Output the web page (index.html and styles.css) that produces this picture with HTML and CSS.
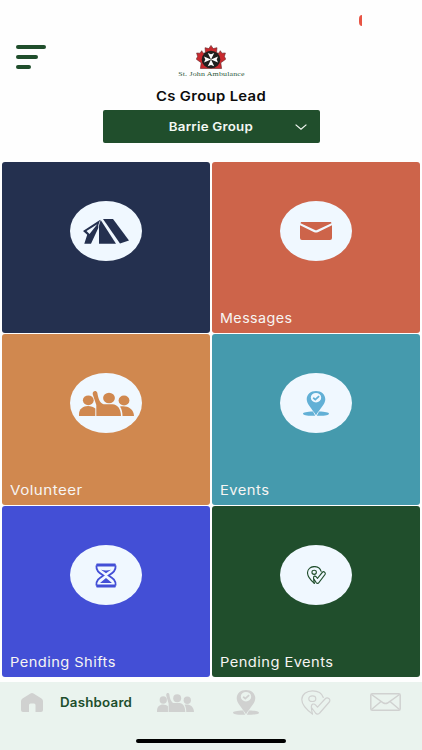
FILE: index.html
```html
<!DOCTYPE html>
<html lang="en">
<head>
  <meta charset="UTF-8">
  <meta name="viewport" content="width=device-width, initial-scale=1">
  <title>Dashboard</title>
  <link rel="stylesheet" href="styles.css">
</head>
<body>
  <!-- shared icons -->
  <svg class="defs" width="0" height="0">
    <symbol id="people" viewBox="0 0 55 25" preserveAspectRatio="none">
      <ellipse cx="9.3" cy="9.3" rx="5.4" ry="4.9"/>
      <path d="M0 25v-2c0-5 4-8 9-8 3 0 5.500 1 7.300 2.500V25z"/>
      <ellipse cx="30" cy="7" rx="5.900" ry="5.200"/>
      <path d="M17.300 25V14L13.800 3.500C13-.5 17.500-1 18.300 1.800c.8 4.500 2 10 6.200 11.500h9c5 .3 8.500 4.500 8.500 11.700z"/>
      <ellipse cx="45" cy="9.500" rx="5.400" ry="4.900"/>
      <path d="M43.500 25c0-4-.8-7-2.500-9.500 6-1.500 14 1.500 14 9.500z"/>
    </symbol>
    <symbol id="pin" viewBox="0 0 26 25" preserveAspectRatio="none">
      <path d="M10 20.400 12.200 24.700C5 25 0 24.200 0 22.700c0-1.500 4-2.200 10-2.300zM16 20.400c6 .1 10 .8 10 2.300 0 1.500-5 2.300-12.200 2z"/>
      <path fill-rule="evenodd" d="M13 0c5.400 0 9.300 3.500 9.300 8.300 0 5-5.300 9.300-9.300 16-4-6.700-9.300-11-9.300-16C3.700 3.500 7.600 0 13 0zm0 1.900a5.200 4.800 0 1 0 0 9.600 5.200 4.800 0 0 0 0-9.600z"/>
      <path d="M10.200 6.800l2.100 1.800 3.800-3.500" fill="none" stroke="currentColor" stroke-width="1.800"/>
    </symbol>
    <symbol id="pin-check" viewBox="0 0 30 25" preserveAspectRatio="none">
      <g fill="none" stroke="currentColor" stroke-linejoin="round" stroke-linecap="round">
        <path d="M11.500 24C6 20 .8 14.500.8 9.500.8 4.500 5.500.8 11.500.8S21 3.500 22.300 7.500"/>
        <ellipse cx="11.300" cy="8.700" rx="3.500" ry="2.800"/>
        <path d="M11.500 24c-.8-2-1-5-1.200-7-.2-3 2.500-4 4.400-1.800l1.800 2 7.500-8.200c2.500-2.500 6.300.2 4.300 3L18.700 23c-1 1.400-3 1.400-4.200 0l-4-5.500"/>
      </g>
    </symbol>
  </svg>

  <header class="header">
    <span class="rec-dot"></span>
    <div class="menu"><i></i><i></i><i></i></div>
    <div class="brand">
      <svg class="logo" viewBox="0 0 30 24">
        <path fill="#c9292e" stroke="#64282a" stroke-width=".6" d="M15 .4l2.200 3.200L21 2.700l-.5 5 2.300.5 1.500-2.500 1.600 2.500 3.500-.2-1 3.400 1.300 2.800-4.900 3.600.8 5.700H4.400l.8-5.700L.3 14.200l1.300-2.800-1-3.400 3.500.2 1.600-2.500 1.500 2.500 2.300-.5-.5-5 3.800.9z"/>
        <ellipse cx="15" cy="14.500" rx="9.300" ry="8.700" fill="#20201f"/>
        <path fill="#fff" d="M15 14.500l-3.200-6.500 3.200 1.300 3.200-1.300zM15 14.500l-3.200 6.700 3.200-1.300 3.200 1.300zM15 14.500l-7-3 1.300 3-1.300 3zM15 14.500l7-3-1.300 3 1.300 3z"/>
      </svg>
      <span class="brand-name">St. John Ambulance</span>
    </div>
    <h1 class="title">Cs Group Lead</h1>
    <button class="group-select">
      <span>Barrie Group</span>
      <svg class="chevron" viewBox="0 0 12 6"><path d="M.6.6L6 5.200 11.400.6" fill="none" stroke="currentColor" stroke-width="1.200"/></svg>
    </button>
  </header>

  <main class="tiles">
    <div class="tile navy">
      <div class="bubble">
        <svg width="46" height="25" viewBox="0 0 46 25" fill="currentColor">
          <path d="M20 0H30l16 21.500-9 3z"/>
          <path d="M17.700 1L33 24.700H16V6.500z"/>
          <path fill-rule="evenodd" d="M17.300.8L0 12l4.200 3.800-2.900 8.900H8L15.300 9V6zM14.300 5.300L3.500 12l3 3z"/>
        </svg>
      </div>
    </div>
    <div class="tile red">
      <div class="bubble">
        <svg width="32" height="18" viewBox="0 0 32 18" fill="currentColor">
          <path d="M1 0h30l.5 1.300L17 8q-1 .5-2 0L.5 1.300z"/>
          <path d="M0 3.200l14.200 7q1.800.8 3.600 0L32 3.200V16q0 2-2 2H2q-2 0-2-2z"/>
        </svg>
      </div>
      <span class="label messages">Messages</span>
    </div>
    <div class="tile orange">
      <div class="bubble"><svg width="55" height="25" fill="currentColor"><use href="#people"/></svg></div>
      <span class="label volunteer">Volunteer</span>
    </div>
    <div class="tile teal">
      <div class="bubble"><svg width="26" height="25" fill="currentColor"><use href="#pin"/></svg></div>
      <span class="label events">Events</span>
    </div>
    <div class="tile blue">
      <div class="bubble">
        <svg width="22" height="25" viewBox="0 0 22 25">
          <g fill="none" stroke="currentColor" stroke-width="1.800">
            <path fill="currentColor" d="M2 1.200h18v1.500H2zM2 22.300h18v1.500H2z" stroke-width="1.500" stroke-linejoin="round"/>
            <path d="M1.400 2.500c-.5 5.500 3.100 7.500 6.900 10-3.800 2.500-7.400 4.500-6.900 10M20.600 2.500c.5 5.500-3.100 7.500-6.900 10 3.800 2.500 7.400 4.500 6.900 10"/>
          </g>
          <path fill="currentColor" d="M6 6.800q5 1.500 10 0L11 10.200zM5 20l6-5 6 5z"/>
        </svg>
      </div>
      <span class="label shifts">Pending Shifts</span>
    </div>
    <div class="tile green">
      <div class="bubble"><svg width="19" height="18" stroke-width="1.700"><use href="#pin-check"/></svg></div>
      <span class="label pending">Pending Events</span>
    </div>
  </main>

  <nav class="tabbar">
    <div class="tabs">
      <svg class="home" width="22" height="19" viewBox="0 0 22 19"><path fill="currentColor" d="M9.500.5q1.500-.8 3 0l8 5q1.500 1 1.500 2.500v9q0 2-2 2h-5.500v-7q0-1.500-1.500-1.500H9.500Q8 10.500 8 12v7H2q-2 0-2-2V8q0-1.500 1.500-2.500z"/></svg>
      <span class="tab-label">Dashboard</span>
      <svg class="people" width="37" height="19" fill="currentColor"><use href="#people"/></svg>
      <svg class="pin" width="26" height="25" fill="currentColor"><use href="#pin"/></svg>
      <svg class="check" width="30" height="25" stroke-width="1.200"><use href="#pin-check"/></svg>
      <svg class="mail" width="31" height="18" viewBox="0 0 31 18"><g fill="none" stroke="currentColor" stroke-width="1.500"><rect x=".8" y=".8" width="29.400" height="16.400" rx="1.500"/><path d="M1.500 1.500l12 8.500q2 1.200 4 0l12-8.500M1.500 16.500l9.500-8M29.500 16.500L20 8.500"/></g></svg>
    </div>
    <div class="home-indicator"></div>
  </nav>
</body>
</html>
```
FILE: styles.css
```css
html, body {
  margin: 0;
  padding: 0;
  height: 100%;
}
body {
  display: flex;
  flex-direction: column;
  width: 422px;
  height: 750px;
  overflow: hidden;
  background: #fefefe;
  font-family: Inter, "Liberation Sans", sans-serif;
}
svg {
  display: block;
  flex-shrink: 0;
}
.defs { position: absolute; }

/* header */
.header {
  position: relative;
  box-sizing: border-box;
  height: 162px;
  padding-top: 45px;
  display: flex;
  flex-direction: column;
  align-items: center;
  flex-shrink: 0;
}
.rec-dot {
  position: absolute;
  left: 359px;
  top: 15px;
  width: 3px;
  height: 11px;
  background: #e85444;
  border-radius: 3px 0 0 3px / 4px 0 0 4px;
}
.menu {
  position: absolute;
  left: 16px;
  top: 45px;
  display: flex;
  flex-direction: column;
  gap: 5.500px;
}
.menu i {
  width: 29.500px;
  height: 4.400px;
  border-radius: 2px;
  background: #204e2c;
}
.menu i:nth-child(2) { width: 22px; }
.menu i:nth-child(3) { width: 15px; }
.brand {
  display: flex;
  flex-direction: column;
  align-items: center;
}
.logo {
  width: 30px;
  height: 24px;
}
.brand-name {
  font: 7px/10px "Liberation Serif", serif;
  letter-spacing: 0.150px;
  color: #2e5a40;
  transform: scaleX(1.13);
}
.title {
  margin: 8px 0 0;
  font-size: 13.500px;
  line-height: 18px;
  font-weight: 600;
  letter-spacing: 0.300px;
  color: #0c0c0c;
  transform: scaleX(1.1);
}
.group-select {
  position: relative;
  width: 217px;
  height: 33px;
  margin: 5px 0 0;
  padding: 0;
  border: none;
  border-radius: 2px;
  background: #204e2c;
  color: #f3f8f3;
  font: 600 12px/33px Inter, sans-serif;
  letter-spacing: 0.200px;
}
.group-select span {
  display: inline-block;
  transform: scaleX(1.11);
}
.chevron {
  position: absolute;
  right: 13px;
  top: 14px;
  width: 12px;
  height: 6px;
}

/* tiles */
.tiles {
  display: grid;
  grid-template-columns: 208px 208px;
  grid-auto-rows: 170.500px;
  gap: 1.500px 2px;
  padding: 0 2px;
}
.tile {
  display: flex;
  flex-direction: column;
  justify-content: space-between;
  box-sizing: border-box;
  padding: 39px 8px 5px;
  border-radius: 3px;
}
.bubble {
  align-self: center;
  display: flex;
  align-items: center;
  justify-content: center;
  width: 72px;
  height: 60px;
  border-radius: 50%;
  background: #f0f8ff;
}
.label {
  align-self: flex-start;
  font-size: 13px;
  line-height: 20px;
  letter-spacing: 0.400px;
  color: #f7f5f3;
  white-space: nowrap;
  transform-origin: left;
}
.messages { transform: scaleX(1.1); }
.volunteer { transform: scaleX(1.165); }
.events { transform: scaleX(1.135); }
.shifts { transform: scaleX(1.125); }
.pending { transform: scaleX(1.128); }

.navy { background: #24304f; color: #24304f; }
.red { background: #cd644a; color: #cd644a; }
.orange { background: #d0884f; color: #d0884f; }
.teal { background: #459aad; color: #62b0d6; }
.blue { background: #434fd6; color: #434fd6; }
.green { background: #204e2c; color: #204e2c; }

/* bottom navigation */
.tabbar {
  display: flex;
  flex-direction: column;
  align-items: center;
  justify-content: space-between;
  box-sizing: border-box;
  width: 422px;
  height: 68px;
  margin-top: auto;
  padding: 7px 0;
  flex-shrink: 0;
  background: #eaf3ee;
  color: #d0d1d0;
}
.tabs {
  display: flex;
  align-items: center;
  box-sizing: border-box;
  width: 100%;
  height: 26px;
  padding-left: 21px;
}
.tab-label {
  width: 97px;
  margin-left: 17px;
  font-size: 12.500px;
  font-weight: 600;
  letter-spacing: 0.200px;
  color: #204e2c;
  transform: scaleX(1.065);
  transform-origin: left;
}
.pin { margin-left: 39px; }
.check { margin-left: 42px; }
.mail { margin-left: 39px; }
.home-indicator {
  width: 150px;
  height: 4px;
  border-radius: 2px;
  background: #000;
}
```
